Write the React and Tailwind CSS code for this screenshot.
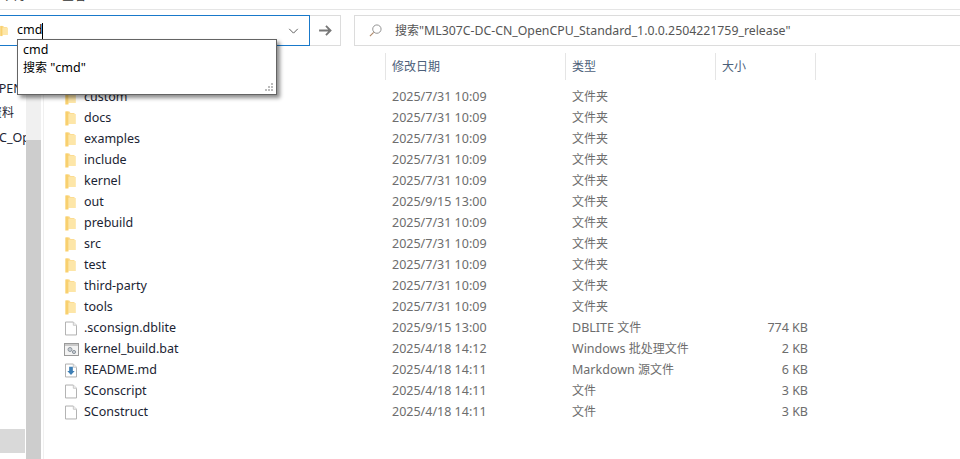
import React from 'react';

const FONT = "font-['Noto_Sans','Noto_Sans_CJK_SC',sans-serif]";

const rows = [
  { name: 'custom', date: '2025/7/31 10:09', type: '文件夹', size: '', icon: 'folder' },
  { name: 'docs', date: '2025/7/31 10:09', type: '文件夹', size: '', icon: 'folder' },
  { name: 'examples', date: '2025/7/31 10:09', type: '文件夹', size: '', icon: 'folder' },
  { name: 'include', date: '2025/7/31 10:09', type: '文件夹', size: '', icon: 'folder' },
  { name: 'kernel', date: '2025/7/31 10:09', type: '文件夹', size: '', icon: 'folder' },
  { name: 'out', date: '2025/9/15 13:00', type: '文件夹', size: '', icon: 'folder' },
  { name: 'prebuild', date: '2025/7/31 10:09', type: '文件夹', size: '', icon: 'folder' },
  { name: 'src', date: '2025/7/31 10:09', type: '文件夹', size: '', icon: 'folder' },
  { name: 'test', date: '2025/7/31 10:09', type: '文件夹', size: '', icon: 'folder' },
  { name: 'third-party', date: '2025/7/31 10:09', type: '文件夹', size: '', icon: 'folder' },
  { name: 'tools', date: '2025/7/31 10:09', type: '文件夹', size: '', icon: 'folder' },
  { name: '.sconsign.dblite', date: '2025/9/15 13:00', type: 'DBLITE 文件', size: '774 KB', icon: 'file' },
  { name: 'kernel_build.bat', date: '2025/4/18 14:12', type: 'Windows 批处理文件', size: '2 KB', icon: 'bat' },
  { name: 'README.md', date: '2025/4/18 14:11', type: 'Markdown 源文件', size: '6 KB', icon: 'md' },
  { name: 'SConscript', date: '2025/4/18 14:11', type: '文件', size: '3 KB', icon: 'file' },
  { name: 'SConstruct', date: '2025/4/18 14:11', type: '文件', size: '3 KB', icon: 'file' },
];

// the chinese glyphs sit a bit smaller than the latin ones in the picture
function Mixed({ text }) {
  return text.split(/([\u4e00-\u9fff]+)/).map((part, i) =>
    /[\u4e00-\u9fff]/.test(part) ? (
      <span key={i} className="text-[12px]">{part}</span>
    ) : (
      part
    )
  );
}

function FolderIcon({ className }) {
  return (
    <svg viewBox="0 0 11 15" className={className}>
      <path d="M0.5 0.5H4.5L5.5 2H9.5V3H10.5V13H3.5L0.5 14.5Z" fill="#fcdc92" />
      <path d="M0.5 0.5H3.5V14.5H0.5Z" fill="#f8d06f" />
      <path d="M3.5 3H10.5V13H3.5Z" fill="#fde6a8" />
    </svg>
  );
}

function FileIcon({ children }) {
  return (
    <svg viewBox="0 0 13 15" className="w-[12px] h-[15px]">
      <path d="M0.5 0.5H9L12.5 4V14.5H0.5Z" fill="#fff" stroke="#a9a9a9" />
      <path d="M9 0.5V4H12.5" fill="#f0f0f0" stroke="#c4c4c4" />
      {children}
    </svg>
  );
}

function RowIcon({ icon }) {
  if (icon === 'folder') return <FolderIcon className="w-[11px] h-[15px]" />;
  if (icon === 'bat') {
    return (
      <svg viewBox="0 0 15 13" className="w-[15px] h-[13px] -ml-px">
        <rect x="0.5" y="0.5" width="14" height="12" fill="#f3f3f3" stroke="#9a9a9a" />
        <rect x="1" y="1" width="13" height="2" fill="#c9c9c9" />
        <circle cx="6" cy="6.5" r="2" fill="#c6ccd2" stroke="#8e969e" />
        <circle cx="10" cy="9" r="1.6" fill="#c6ccd2" stroke="#8e969e" />
      </svg>
    );
  }
  if (icon === 'md') {
    return (
      <FileIcon>
        <path d="M4.5 3.5H8.5V8H10.5L6.5 12.5L2.5 8H4.5Z" fill="#3f7fb5" />
      </FileIcon>
    );
  }
  return <FileIcon />;
}

export default function App() {
  return (
    <div className={`${FONT} relative flex flex-col w-[960px] h-[459px] overflow-hidden bg-white text-[12.5px] text-[#1b2433]`}>
      {/* ribbon, only the bottom edge of the tab labels is left */}
      <div className="h-[10px] shrink-0 border-b border-[#e5e5e5] overflow-hidden">
        <div className="flex gap-[33px] pl-[5px] -mt-[13px] text-[12px] leading-[18px] text-[#333]">
          <span>共享</span>
          <span>查看</span>
        </div>
      </div>

      {/* address + search */}
      <div className="flex h-[31px] mt-[5px] shrink-0">
        <div className="flex items-center w-[310px] border-y border-r border-[#1979ca]">
          <FolderIcon className="w-[8px] h-[14px] shrink-0" />
          <span className="ml-[9px] text-black">cmd</span>
          <span className="w-px h-[16px] bg-black" />
          <svg viewBox="0 0 12 7" className="w-[11px] h-[6px] ml-auto mr-[10px]">
            <path d="M1 1L6 6L11 1" fill="none" stroke="#555" strokeWidth="1.1" />
          </svg>
        </div>
        <div className="flex items-center justify-center w-[31px] border-y border-r border-[#dcdcdc]">
          <svg viewBox="0 0 14 12" className="w-[13px] h-[11px]">
            <path d="M0 6H12M7.5 1L12.5 6L7.5 11" fill="none" stroke="#777" strokeWidth="2" />
          </svg>
        </div>
        <div className="flex items-center flex-1 ml-[13px] pl-[14px] border-y border-l border-[#dcdcdc] text-[12.3px] text-[#555]">
          <svg viewBox="0 0 14 14" className="w-[13px] h-[13px] shrink-0">
            <circle cx="8.5" cy="5.5" r="4.5" fill="none" stroke="#8a8a8a" />
            <path d="M5 9L1 13" stroke="#b08a6a" strokeWidth="1.2" />
          </svg>
          <span className="ml-[13px] pt-[2px] whitespace-nowrap">
            <Mixed text={'搜索"ML307C-DC-CN_OpenCPU_Standard_1.0.0.2504221759_release"'} />
          </span>
        </div>
      </div>

      <div className="flex flex-1 min-h-0 mt-[7px]">
        {/* nav pane, cut off at the left */}
        <div className="relative w-[26px] shrink-0 overflow-hidden">
          <div className="flex flex-col whitespace-nowrap pt-[23px]">
            <span className="h-[25px] leading-[25px] -ml-[11px]">OPEN</span>
            <span className="h-[24px] leading-[24px] -ml-[10px] text-[12px]">资料</span>
            <span className="h-[25px] leading-[25px] -ml-[1px]">C_OpenCPU</span>
          </div>
          <div className="absolute left-0 right-px top-[376px] h-[24px] bg-[#d9d9d9]" />
        </div>
        <div className="flex flex-col w-[15px] shrink-0 bg-[#f0f0f0]">
          <div className="h-[87px]" />
          <div className="flex-1 bg-[#cdcdcd]" />
        </div>
        <div className="w-[3px] shrink-0 border-r border-[#f0f0f0]" />

        {/* file list */}
        <div className="flex flex-col flex-1 min-w-0">
          <div className="flex h-[27px] shrink-0 text-[12px] text-[#4c607a]">
            <div className="w-[342px] border-r border-[#e5e5e5]" />
            <div className="w-[180px] pl-[6px] pt-[5px] border-r border-[#e5e5e5]">修改日期</div>
            <div className="w-[150px] pl-[6px] pt-[5px] border-r border-[#e5e5e5]">类型</div>
            <div className="w-[100px] pl-[6px] pt-[5px] border-r border-[#e5e5e5]">大小</div>
          </div>
          <div className="flex flex-col pt-[7px]">
            {rows.map((row) => (
              <div key={row.name} className="flex items-center h-[21px] whitespace-nowrap">
                <div className="flex items-center w-[341px] pl-[21px]">
                  <div className="w-[19px] flex items-center">
                    <RowIcon icon={row.icon} />
                  </div>
                  <span>{row.name}</span>
                </div>
                <div className="w-[180px] pl-[7px] text-[#6d6d6d]">{row.date}</div>
                <div className="w-[150px] pl-[7px] text-[#6d6d6d]"><Mixed text={row.type} /></div>
                <div className="w-[93px] text-right text-[#6d6d6d]">{row.size}</div>
              </div>
            ))}
          </div>
        </div>
      </div>

      {/* autocomplete dropdown */}
      <div className="absolute left-[17px] top-[39px] flex flex-col w-[260px] h-[56px] pl-[5px] pt-px bg-white border border-[#646464] shadow-[3px_3px_4px_rgba(0,0,0,0.45)] leading-[18px] text-black">
        <span>cmd</span>
        <span><Mixed text={'搜索 "cmd"'} /></span>
        <svg viewBox="0 0 9 9" className="absolute right-[2px] bottom-[2px] w-[9px] h-[9px]">
          <path d="M6 0h2v2H6zM3 3h2v2H3zM6 3h2v2H6zM0 6h2v2H0zM3 6h2v2H3zM6 6h2v2H6z" fill="#bcbcbc" />
        </svg>
      </div>
    </div>
  );
}
